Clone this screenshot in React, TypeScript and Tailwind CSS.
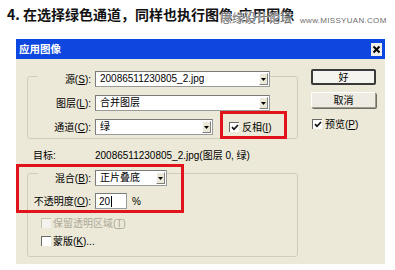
import type { ReactNode } from "react";

const ui = "font-['Liberation_Sans','Noto_Sans_CJK_SC',sans-serif]";

function U({ c }: { c: string }) {
  return <span className="underline underline-offset-[1px]">{c}</span>;
}

function Arrow() {
  return (
    <div className="flex h-[12px] w-[9px] shrink-0 items-center justify-center border border-b-[#808080] border-l-white border-r-[#808080] border-t-white bg-[#ece9d8]">
      <svg width="5" height="3" viewBox="0 0 5 3">
        <path d="M0 0h5L2.5 3z" fill="#000" />
      </svg>
    </div>
  );
}

function Select({ width, children }: { width: string; children: ReactNode }) {
  return (
    <div className={`flex h-[16px] items-center justify-between border border-[#9a9a9a] border-l-[#7a7a7a] border-t-[#7a7a7a] bg-white pl-[4px] pr-[1px] ${width}`}>
      <span className="truncate leading-[14px]">{children}</span>
      <Arrow />
    </div>
  );
}

function Check({ checked = false, disabled = false }: { checked?: boolean; disabled?: boolean }) {
  return (
    <div
      className={`flex h-[10px] w-[10px] shrink-0 items-center justify-center border-l border-t ${
        disabled ? "border-[#c4c1b0] bg-[#f3f2ec]" : "border-[#6a6a6a] bg-white"
      }`}
    >
      {checked && (
        <svg width="8" height="7" viewBox="0 0 8 7">
          <path d="M1 3.2 3 5.3 7 1" fill="none" stroke="#111" strokeWidth="1.7" />
        </svg>
      )}
    </div>
  );
}

function Label({ children }: { children: ReactNode }) {
  return <div className="w-[67px] shrink-0 pr-[4px] text-right">{children}</div>;
}

export default function App() {
  return (
    <div className={`relative h-[270px] w-[395px] overflow-hidden bg-white ${ui}`}>
      {/* heading */}
      <div className="h-[39px] pl-[7px] pt-[4px] font-['Noto_Sans_CJK_SC',sans-serif] text-[14px] font-bold leading-[20px] text-[#111]">
        4. 在选择绿色通道，同样也执行图像-应用图像
      </div>

      {/* watermark, stamped over the heading */}
      <div className="absolute left-[220px] top-[9px] flex items-baseline gap-[8px] text-[#6e6e6e] [text-shadow:0_0_2px_#fff,0_0_2px_#fff,0_0_1px_#fff]">
        <span className="font-['Noto_Sans_CJK_SC',sans-serif] text-[12px] leading-[18px]">思缘设计论坛</span>
        <span className="text-[8px] tracking-[0.3px]">www.MISSYUAN.COM</span>
      </div>

      {/* dialog */}
      <div className="ml-[16px] w-[369px] text-[10px] text-black">
        <div className="flex h-[20px] items-center justify-between bg-[#0d47e0] pl-[3px] pr-[3px]">
          <span className="font-['Noto_Sans_CJK_SC',sans-serif] text-[10.5px] font-bold text-white">应用图像</span>
          <div className="flex h-[13px] w-[11px] items-center justify-center bg-[#f1efe6]">
            <svg width="9" height="9" viewBox="0 0 9 9">
              <path d="M1.5 1.5 7.5 7.5M7.5 1.5 1.5 7.5" stroke="#000" strokeWidth="2" />
            </svg>
          </div>
        </div>

        <div className="relative h-[205px] bg-[#ece9d8]">
          <div className="flex">
            {/* source group */}
            <div className="ml-[11px] w-[271px]">
              <div className="mt-[17px] h-[63px] rounded-[3px] border border-[#cfcdbd]">
                <div className="-mt-[6px] ml-[10px] flex h-[16px] w-[232px] items-center bg-[#ece9d8]">
                  <div className="w-[57px] shrink-0 pr-[4px] text-right">
                    源(<U c="S" />):
                  </div>
                  <Select width="w-[175px]">20086511230805_2.jpg</Select>
                </div>
                <div className="mt-[8px] flex h-[16px] items-center">
                  <Label>
                    图层(<U c="L" />):
                  </Label>
                  <Select width="w-[175px]">合并图层</Select>
                </div>
                <div className="mt-[8px] flex h-[16px] items-center">
                  <Label>
                    通道(<U c="C" />):
                  </Label>
                  <Select width="w-[118px]">绿</Select>
                  <div className="ml-[16px] flex items-center gap-[3px]">
                    <Check checked />
                    <span>
                      反相(<U c="I" />)
                    </span>
                  </div>
                </div>
              </div>
            </div>

            {/* buttons */}
            <div className="ml-[13px] mt-[10px] flex w-[65px] flex-col">
              <div className="flex h-[16px] items-center justify-center rounded-[2px] border-2 border-[#3a3a3a] bg-[#f5f4ee]">
                好
              </div>
              <div className="mt-[7px] flex h-[16px] items-center justify-center rounded-[2px] border border-[#9d9b8c] border-l-white border-t-white bg-[#eeece2] shadow-[1px_1px_0_#6f6d62]">
                取消
              </div>
              <div className="ml-[1px] mt-[10px] flex h-[12px] items-center gap-[3px]">
                <Check checked />
                <span>
                  预览(<U c="P" />)
                </span>
              </div>
            </div>
          </div>

          {/* target + blend group */}
          <div className="ml-[11px] w-[271px]">
            <div className="mt-[10px] flex h-[12px] items-center">
              <div className="ml-[6px] w-[62px] shrink-0">目标:</div>
              <span>20086511230805_2.jpg(图层 0, 绿)</span>
            </div>

            <div className="mt-[12px] h-[84px] rounded-[3px] border border-[#cfcdbd]">
              <div className="-mt-[4px] ml-[10px] flex h-[16px] w-[80px] items-center bg-[#ece9d8]">
                <div className="w-[57px] shrink-0 pr-[4px] text-right">
                  混合(<U c="B" />):
                </div>
                <Select width="w-[72px] shrink-0">正片叠底</Select>
              </div>
              <div className="mt-[7px] flex h-[16px] items-center">
                <Label>
                  不透明度(<U c="O" />):
                </Label>
                <div className="flex h-[16px] w-[32px] items-center border border-[#9a9a9a] border-l-[#7a7a7a] border-t-[#7a7a7a] bg-white pl-[3px]">
                  20<span className="ml-[1px] inline-block h-[11px] w-px bg-black" />
                </div>
                <span className="ml-[5px]">%</span>
              </div>
              <div className="ml-[13px] mt-[8px] flex h-[12px] items-center gap-[2px] text-[#aca899]">
                <Check disabled />
                <span>
                  保留透明区域(<U c="T" />)
                </span>
              </div>
              <div className="ml-[13px] mt-[6px] flex h-[12px] items-center gap-[2px]">
                <Check />
                <span>
                  蒙版(<U c="K" />)...
                </span>
              </div>
            </div>
          </div>

          {/* red annotation boxes */}
          <div className="absolute left-[204px] top-[52px] h-[28px] w-[67px] border-[3px] border-[#e1141b]" />
          <div className="absolute left-0 top-[105px] h-[49px] w-[168px] border-[3px] border-[#e1141b]" />
        </div>
      </div>
    </div>
  );
}
